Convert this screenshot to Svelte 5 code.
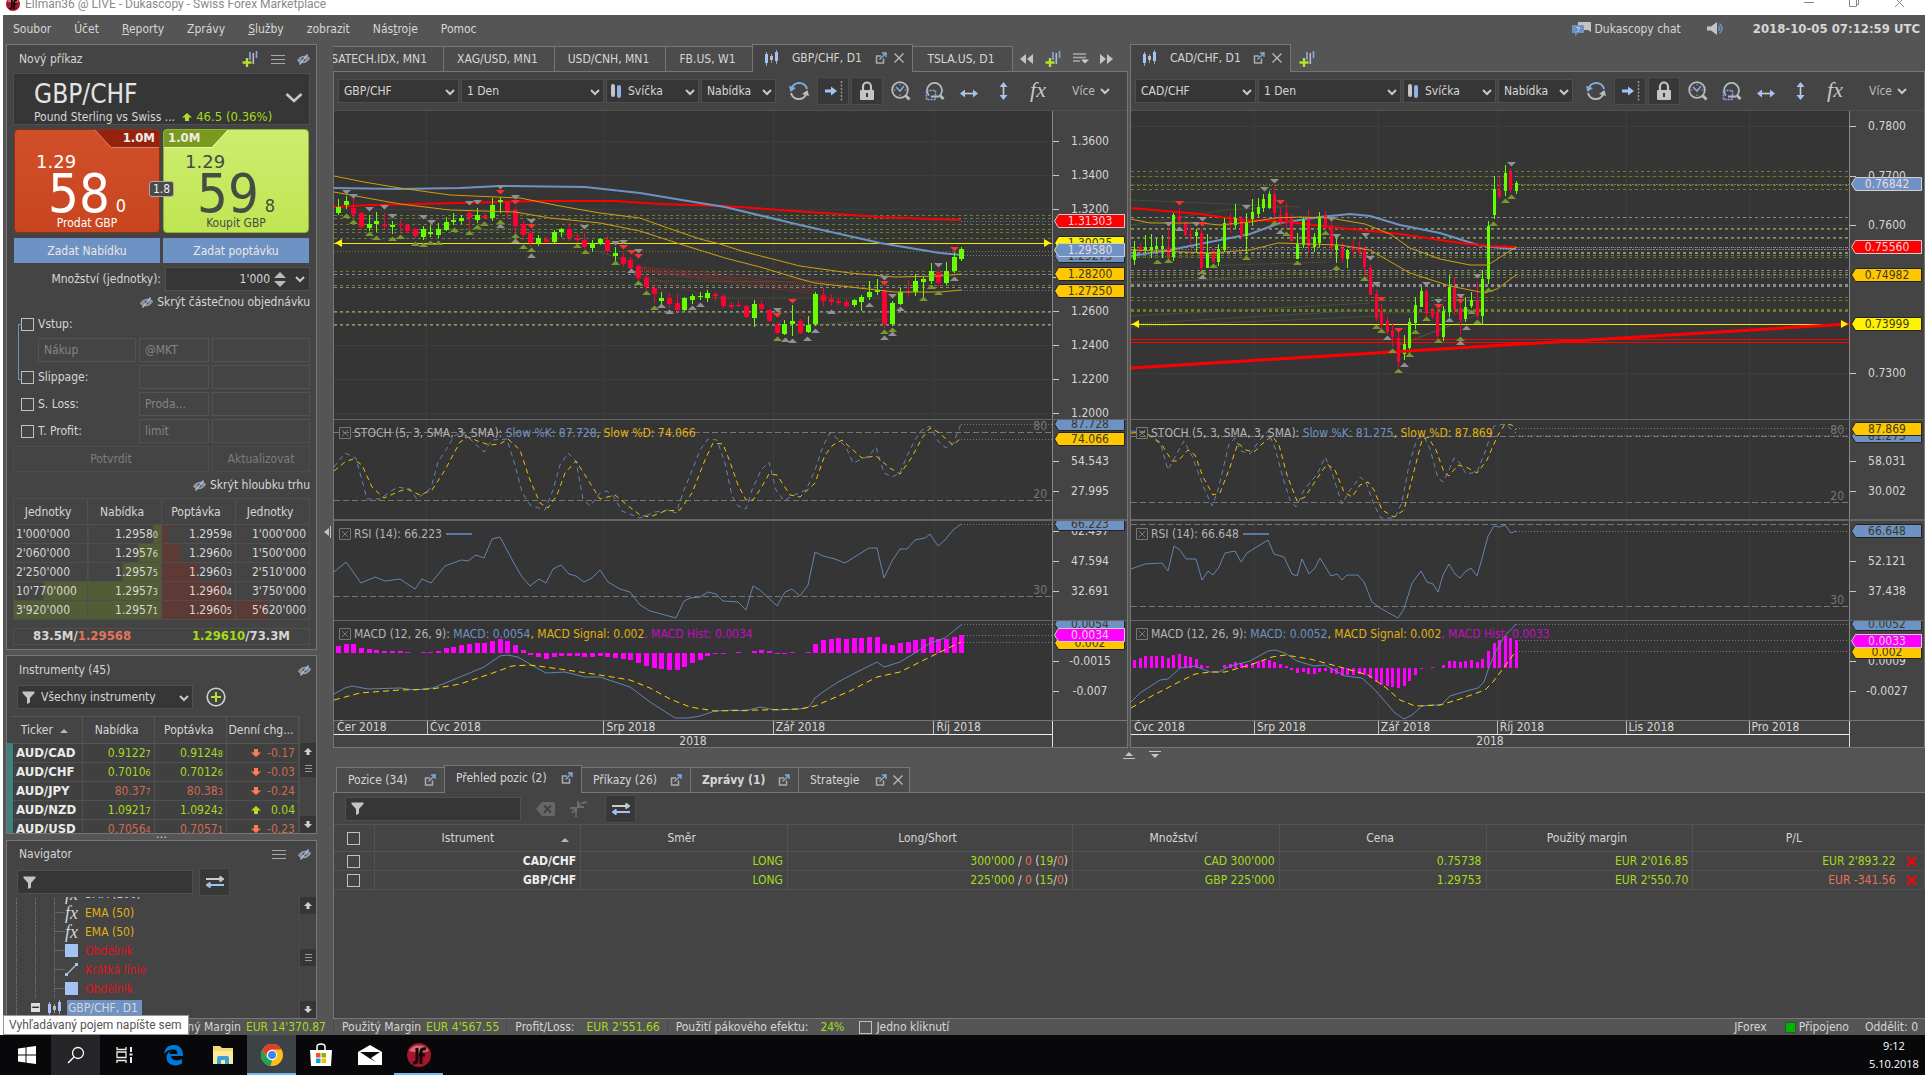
<script>
  const menu = [
    ["", "Soubor", ""],
    ["", "Účet", ""],
    ["", "R", "eporty"],
    ["", "Zprávy", ""],
    ["", "S", "lužby"],
    ["", "zobrazit", ""],
    ["Nás", "t", "roje"],
    ["", "Pomoc", ""],
  ];

  // bq, b, a, aq = share of the cell covered by the cumulative volume bar
  const depth = [
    { bidQty: "1'000'000", bq: 0, bid: "1.2958", bs: "0", b: 11, ask: "1.2959", as: "8", a: 8, askQty: "1'000'000", aq: 0 },
    { bidQty: "2'060'000", bq: 0, bid: "1.2957", bs: "6", b: 31, ask: "1.2960", as: "0", a: 24, askQty: "1'500'000", aq: 0 },
    { bidQty: "2'250'000", bq: 0, bid: "1.2957", bs: "5", b: 54, ask: "1.2960", as: "3", a: 49, askQty: "2'510'000", aq: 0 },
    { bidQty: "10'770'000", bq: 60, bid: "1.2957", bs: "3", b: 100, ask: "1.2960", as: "4", a: 87, askQty: "3'750'000", aq: 0 },
    { bidQty: "3'920'000", bq: 100, bid: "1.2957", bs: "1", b: 100, ask: "1.2960", as: "5", a: 100, askQty: "5'620'000", aq: 42 },
  ];

  const instruments = [
    { name: "AUD/CAD", bid: "0.9122", bs: "7", ask: "0.9124", as: "8", chg: "-0.17", quote: "up" },
    { name: "AUD/CHF", bid: "0.7010", bs: "6", ask: "0.7012", as: "6", chg: "-0.03", quote: "up" },
    { name: "AUD/JPY", bid: "80.37", bs: "7", ask: "80.38", as: "3", chg: "-0.24", quote: "down" },
    { name: "AUD/NZD", bid: "1.0921", bs: "7", ask: "1.0924", as: "2", chg: "0.04", quote: "up" },
    { name: "AUD/USD", bid: "0.7056", bs: "4", ask: "0.7057", as: "1", chg: "-0.23", quote: "down" },
  ];

  const tree = [
    { icon: "fxs", label: "SMA (100)", color: "plain" },
    { icon: "fxs", label: "EMA (50)", color: "gold" },
    { icon: "fxs", label: "EMA (50)", color: "gold" },
    { icon: "rect", label: "Obdélník", color: "red" },
    { icon: "line", label: "Krátká línie", color: "red" },
    { icon: "rect", label: "Obdélník", color: "red" },
  ];

  const positions = [
    { pair: "CAD/CHF", side: "LONG", long: "300'000", short: "0", nl: "19", ns: "0", qty: "CAD 300'000", price: "0.75738", margin: "EUR 2'016.85", pl: "EUR 2'893.22", loss: false },
    { pair: "GBP/CHF", side: "LONG", long: "225'000", short: "0", nl: "15", ns: "0", qty: "GBP 225'000", price: "1.29753", margin: "EUR 2'550.70", pl: "EUR -341.56", loss: true },
  ];

  const BLUE = "#6e92c3";
  const GOLD = "#ffc700";
  const PINK = "#ff00ff";

  const gbp = {
    pair: "GBP/CHF",
    x: 334,
    first: 338,
    step: 7.697,
    body: 5,
    end: 961,
    vgrid: [426, 603, 773, 934],
    hgrid: [141, 175, 209, 277, 312, 345, 379, 413],
    // direction, high, body top, body bottom, low
    candles: "g199,207,213,215 g196,201,205,209 r197,208,214,219 r211,213,227,230 g215,224,228,231 g212,221,224,232 r213,224,226,229 g221,225,227,234 r220,224,225,232 r224,225,231,233 r228,229,236,238 g226,229,237,240 g225,232,234,237 g223,229,235,238 g217,222,230,231 g213,220,222,225 g215,218,221,224 r210,213,218,230 g208,215,220,223 r213,216,218,219 g198,205,218,221 g197,200,202,213 r201,202,211,218 r207,210,226,236 r220,224,235,240 r230,233,243,247 g235,238,243,246 r237,239,242,242 g230,232,242,243 g228,229,232,237 r223,229,238,241 r233,238,240,243 r233,240,247,249 g240,243,248,252 g238,239,244,245 r236,240,251,254 g247,253,256,261 r252,257,264,267 r257,260,268,270 r264,266,278,282 r275,278,287,290 r286,288,294,303 g292,298,301,305 r293,298,304,308 r294,303,310,312 g297,298,310,311 g294,296,300,304 g292,296,297,300 g290,293,298,302 r292,294,296,301 r294,296,306,308 r302,305,307,309 r301,305,306,307 r305,306,317,318 g300,304,318,327 r300,304,309,311 r309,310,321,322 r322,325,333,334 g320,324,334,335 g305,321,324,336 r319,321,333,334 g316,325,332,333 g292,294,324,326 r288,295,301,306 r294,299,302,306 r298,301,303,305 r299,302,306,308 g299,300,305,307 g295,297,302,311 g281,292,297,300 g279,290,292,295 r289,291,324,328 g301,303,324,326 g288,292,304,305 r280,291,292,297 g274,281,292,296 g277,279,282,297 g263,271,281,284 r269,272,283,287 g262,271,283,285 g252,257,271,273 g247,249,259,261",
    levels: [
      [215, "o"], [218, "o"], [224, "o"], [229, "o"], [232, "o"], [238, "o"], [251, "od"], [271, "o"], [274, "g"],
      [285, "o"], [287, "g"], [311, "g"], [312, "o"], [324, "g"], [325, "o"],
    ],
    yellow: 243,
    reds: [],
    trend: "",
    rays: ["638,267 820,281", "638,268 815,285", "638,269 815,288", "638,270 815,291", "638,271 815,294", "646,276 700,294", "640,272 670,296", "815,281 875,289", "777,326 792,308", "792,308 810,320"],
    orays: ["423,229 500,230", "500,228 580,236", "646,281 875,282", "680,298 880,298", "815,325 890,319", "600,252 630,262"],
    dotted: [221, 255, 274, 290],
    lines: [
      ["ma red", "334,207 370,205 460,203 540,201 615,201 660,204 725,206 780,210 880,217 930,219 961,220"],
      ["ma blue", "334,188 400,189 460,188 500,186 585,187 640,193 700,203 725,207 800,225 880,243 940,253 962,255"],
      ["ma gold", "334,176 364,182 400,188 450,195 520,198 560,206 600,213 640,218 665,227 700,239 720,244 745,252 800,266 850,273 895,277 940,276 962,274"],
      ["ma gold", "334,192 400,204 450,210 515,212 550,218 600,223 640,231 680,244 725,258 760,267 800,279 815,283 850,287 895,292 940,292 962,290"],
    ],
    marks: {
      gd: "346,192 353,196 369,209 384,207 392,216 423,217 431,222 469,203 477,202 500,187 515,197 531,221 584,227 615,243 623,242 638,251 777,310 884,278 892,296 938,265",
      rd: "500,192 515,202 531,226 623,247 631,252 638,256 777,315 792,301 884,283 954,249",
      gu: "500,226 515,241 531,256 631,271 661,306 669,312 692,308 700,305 785,340 792,341 807,339 815,331 831,312 869,305 884,338 892,334 900,309 954,279",
      ou: "346,216 353,222 369,234 376,238 392,239 400,237 415,244 423,245 430,243 438,243 454,230 469,233 477,227 484,224 500,222 515,236 523,247 531,250 577,246 585,252 615,263 638,283 646,293 654,308 777,339 884,332 892,330 923,299 931,287 938,293",
    },
    axis: [
      ["1.3600", 141], ["1.3400", 175], ["1.3200", 209], ["1.2800", 277], ["1.2600", 311], ["1.2400", 345], ["1.2200", 379], ["1.2000", 413],
    ],
    tags: [
      ["1.31303", 221, "#ff0000", true], ["1.30025", 243, "#fff200", false], ["1.29275", 256, BLUE, false],
      ["1.29580", 250, BLUE, true], ["1.28200", 274, GOLD, false], ["1.27250", 291, GOLD, false],
    ],
    stoch: {
      k: "334,467 345,453 356,458 367,499 380,499 397,487 410,489 417,499 431,488 438,462 446,450 454,436 462,432 470,439 484,452 492,440 507,439 515,465 522,492 530,505 545,510 553,490 560,465 568,453 576,461 583,499 590,506 600,493 607,491 614,497 622,511 640,518 655,512 668,510 676,513 684,490 693,468 700,450 708,439 717,440 725,463 732,496 738,506 746,509 752,490 761,470 769,462 776,490 784,501 792,496 806,490 815,470 823,446 830,433 838,439 846,447 853,463 862,459 869,456 876,447 884,473 892,477 900,473 907,456 915,440 922,430 930,426 938,441 946,448 953,444 961,424",
      d: "334,471 345,462 353,459 362,465 372,487 384,498 400,491 407,489 420,495 432,490 445,470 460,442 468,437 480,442 490,445 500,444 508,439 520,450 530,480 540,503 548,508 557,495 565,473 576,461 585,475 600,499 615,495 627,505 640,515 650,517 665,511 680,510 692,493 705,460 713,443 723,444 730,462 738,485 746,500 753,500 761,488 769,474 777,475 790,495 800,497 815,483 825,455 833,445 842,440 853,450 862,458 876,456 890,468 900,474 912,457 922,438 930,428 938,432 953,445 961,438",
      kv: "87.728",
      dv: "74.066",
      levels: [["80", 432], ["20", 500]],
      dotted: [424, 439],
      axis: [["54.543", 461], ["27.995", 491]],
      tags: [["87.728", 424, BLUE, false], ["74.066", 439, GOLD, false]],
    },
    rsi: {
      line: "334,572 346,562 361,583 375,577 385,581 400,579 415,589 422,579 431,583 445,566 461,560 468,561 476,555 484,558 492,539 500,537 515,565 522,577 530,586 539,579 546,583 553,569 561,565 569,574 576,576 584,582 592,578 600,570 608,582 620,589 630,592 640,605 650,611 665,615 676,618 684,601 690,598 700,597 708,592 716,594 723,601 738,602 746,610 753,586 760,590 777,606 785,592 792,589 800,596 808,585 815,552 823,556 835,559 845,563 853,558 869,548 877,548 884,578 892,561 900,549 907,549 915,540 925,538 930,534 938,546 945,540 953,530 961,524",
      v: "66.223",
      levels: [["30", 596]],
      dotted: [524],
      axis: [["62.497", 531], ["47.594", 561], ["32.691", 591]],
      tags: [["66.223", 524, BLUE, false]],
    },
    macd: {
      zero: 653,
      bars: [7,9,9,5,4,3,2,2,2,1,0,1,1,2,5,6,8,9,10,10,12,14,12,8,3,-2,-4,-6,-4,-3,-3,-3,-4,-4,-3,-4,-5,-6,-7,-10,-13,-15,-16,-17,-17,-14,-10,-7,-3,-1,-1,0,1,0,2,3,2,-1,-1,1,0,1,9,13,14,15,14,15,15,16,16,9,8,10,11,13,14,16,14,14,16,18],
      m: "334,694 345,688 352,686 368,689 400,688 415,690 433,688 460,677 484,667 500,656 507,655 518,657 535,667 546,673 565,672 585,677 600,677 630,687 650,702 675,718 688,718 700,716 715,711 735,710 745,711 760,707 775,710 800,709 809,707 815,698 823,692 838,682 855,673 877,662 884,667 900,662 915,653 930,643 945,638 961,625",
      s: "334,700 360,693 400,690 432,689 460,684 490,674 512,666 530,665 560,669 600,675 630,680 650,688 670,699 690,707 715,711 760,710 800,709 815,706 850,691 877,677 900,672 930,657 961,642",
      v: ["0.0054", "0.002", "0.0034"],
      dotted: [624, 635, 642],
      axis: [["-0.0015", 661], ["-0.007", 691]],
      tags: [["0.0054", 624, BLUE, false], ["0.002", 643, GOLD, false], ["0.0034", 635, PINK, true]],
    },
    months: [["Čer 2018", 92], ["Čvc 2018", 177], ["Srp 2018", 170], ["Zář 2018", 161], ["Říj 2018", 118]],
  };

  const cad = {
    pair: "CAD/CHF",
    x: 1131,
    first: 1134,
    step: 5.618,
    body: 3,
    end: 1516,
    vgrid: [1254, 1378, 1497, 1626, 1749],
    hgrid: [126, 176, 225, 324, 373],
    candles: "g241,249,260,265 r243,247,251,253 g235,247,250,253 g234,247,250,258 g238,246,249,253 g235,246,249,258 r228,247,255,259 g213,215,257,261 r208,216,221,225 r221,223,235,236 r227,234,236,245 g229,232,236,253 r229,233,268,271 g234,253,268,268 r249,251,262,262 g244,249,262,266 g218,223,250,252 r213,221,224,233 g204,218,225,229 r216,218,236,239 g213,222,236,254 g199,212,219,226 g198,207,214,217 g194,199,208,212 g191,194,208,209 r186,194,213,225 r207,215,221,226 r203,213,220,229 r214,218,241,242 g233,244,259,259 g217,220,245,248 r210,219,246,253 g233,237,247,252 g212,217,243,247 r211,216,227,231 r221,228,248,250 g235,245,250,263 r242,248,258,263 g249,250,259,268 r239,247,250,258 r241,247,253,254 r246,250,267,278 r264,268,295,295 r290,294,318,321 r304,311,325,329 r317,321,332,334 r323,330,337,347 r333,338,362,367 g335,344,354,360 g318,322,348,353 g297,305,323,329 g287,291,307,307 r289,291,313,317 r308,311,317,319 r304,312,336,340 g306,311,337,341 g275,287,312,317 r277,288,309,315 r302,308,320,334 g297,307,319,322 g292,300,306,308 r282,300,316,318 g270,279,316,325 g221,226,279,284 g176,189,215,219 r177,190,197,198 g165,173,191,196 r168,172,190,193 g181,183,191,194",
    levels: [
      [171, "o"], [176, "o"], [184, "od"], [185, "o"], [189, "o"], [217, "g"], [228, "g"], [229, "o"], [237, "g"], [238, "o"], [247, "g"], [249, "gd"],
      [252, "g"], [253, "g"], [255, "o"], [257, "o"], [270, "g"], [272, "o"], [274, "g"], [277, "o"], [285, "gt"],
      [297, "o"], [300, "o"], [310, "ot"],
    ],
    yellow: 324,
    reds: [339, 342],
    trend: "1131,368 1849,324",
    rays: ["1398,333 1412,320", "1440,312 1450,282", "1170,222 1180,216"],
    orays: ["1131,200 1230,204 1300,207", "1131,225 1225,210 1280,207", "1131,257 1200,256", "1131,282 1350,276", "1200,266 1330,262", "1131,284 1325,272", "1131,316 1370,303", "1131,324 1370,310", "1131,327 1380,316", "1400,345 1480,314", "1380,313 1460,312", "1400,344 1450,326"],
    dotted: [184, 247, 249, 275],
    lines: [
      ["ma blue", "1131,256 1170,250 1210,242 1250,234 1280,223 1320,217 1350,214 1370,216 1400,225 1440,233 1478,245 1500,248 1516,249"],
      ["ma red", "1131,208 1200,214 1240,220 1280,221 1340,228 1400,234 1460,243 1490,246 1516,247"],
      ["ma gold", "1131,219 1150,223 1200,223 1220,225 1250,222 1275,218 1300,217 1330,218 1365,224 1390,234 1410,248 1440,259 1470,265 1488,265 1516,247"],
      ["ma gold", "1131,250 1210,253 1250,250 1278,243 1340,245 1370,250 1410,273 1450,286 1485,293 1497,289 1516,275"],
    ],
    marks: {
      gd: "1168,224 1196,224 1202,219 1246,207 1264,189 1274,181 1331,219 1336,236 1365,235 1370,258 1376,284 1426,284 1438,301 1460,296 1477,276 1511,164",
      rd: "1179,203 1202,224 1280,202 1381,299 1398,330 1438,306 1460,301",
      gu: "1179,229 1202,277 1280,232 1387,338 1404,365 1449,320 1466,328 1460,343",
      ou: "1157,262 1168,261 1202,272 1213,266 1246,258 1274,223 1286,234 1297,263 1325,233 1336,268 1364,279 1376,327 1381,331 1392,351 1398,371 1409,355 1415,332 1426,319 1438,341 1460,339 1471,312 1477,322 1488,290 1493,224 1505,201 1511,197",
    },
    axis: [["0.7800", 126], ["0.7700", 176], ["0.7600", 225], ["0.7300", 373]],
    tags: [
      ["0.76842", 184, BLUE, true], ["0.75560", 247, "#ff0000", true], ["0.74982", 275, GOLD, false], ["0.73999", 324, "#fff200", false],
    ],
    stoch: {
      k: "1131,431 1145,432 1160,442 1168,470 1176,455 1184,441 1192,456 1204,488 1212,506 1218,490 1229,444 1235,438 1241,451 1250,454 1259,441 1268,431 1275,448 1283,478 1290,500 1296,507 1304,490 1318,473 1325,457 1331,470 1342,504 1350,490 1360,477 1366,482 1374,505 1381,518 1395,518 1402,502 1409,465 1417,439 1424,436 1430,449 1438,478 1443,482 1449,470 1454,458 1460,463 1466,474 1477,472 1485,452 1494,426 1505,424 1516,433",
      d: "1131,433 1145,432 1162,445 1172,461 1178,461 1188,450 1195,455 1203,477 1213,495 1220,493 1230,467 1238,443 1246,450 1254,452 1262,444 1272,436 1279,445 1287,475 1297,501 1305,497 1316,480 1327,464 1335,470 1344,492 1352,497 1360,485 1368,482 1374,490 1382,510 1394,517 1404,510 1413,475 1422,440 1428,437 1436,450 1444,472 1449,476 1458,465 1468,468 1477,473 1487,460 1497,437 1505,424 1512,425 1516,430",
      kv: "81.275",
      dv: "87.869",
      levels: [["80", 436], ["20", 502]],
      dotted: [428, 435],
      axis: [["58.031", 461], ["30.002", 491]],
      tags: [["81.275", 436, BLUE, false], ["87.869", 429, GOLD, false]],
    },
    rsi: {
      line: "1131,569 1145,564 1162,563 1168,571 1174,546 1180,550 1186,559 1196,559 1202,580 1208,571 1213,575 1219,567 1225,553 1235,551 1241,562 1247,553 1268,540 1274,554 1284,557 1292,574 1297,576 1302,559 1309,574 1315,568 1320,558 1331,576 1337,574 1342,580 1347,575 1358,575 1364,582 1372,602 1380,608 1398,618 1404,609 1412,583 1421,571 1427,582 1433,584 1438,592 1443,575 1449,564 1455,574 1460,578 1466,571 1471,568 1477,576 1483,555 1488,536 1494,526 1500,527 1505,525 1511,533 1516,531",
      v: "66.648",
      levels: [["", 524], ["30", 606]],
      dotted: [531],
      axis: [["52.121", 561], ["37.438", 591]],
      tags: [["66.648", 531, BLUE, false]],
    },
    macd: {
      zero: 668,
      bars: [8,10,12,12,12,12,10,13,14,12,11,9,3,2,0,0,3,4,6,5,4,5,7,8,8,6,4,2,-2,-5,-4,-6,-6,-4,-3,-5,-6,-8,-7,-7,-6,-7,-10,-14,-17,-18,-19,-20,-18,-13,-7,-1,0,1,0,3,7,7,6,7,8,6,9,17,25,28,32,30,28],
      m: "1131,702 1140,693 1160,680 1168,679 1180,668 1195,666 1210,672 1219,672 1230,666 1250,661 1268,651 1275,650 1285,653 1297,661 1314,666 1325,665 1345,676 1362,678 1375,690 1395,713 1404,719 1412,715 1422,706 1432,705 1441,705 1450,696 1470,690 1478,688 1484,682 1489,667 1496,651 1504,637 1516,624",
      s: "1131,708 1150,697 1175,684 1195,674 1210,672 1225,672 1250,665 1272,657 1285,655 1310,659 1340,667 1368,675 1385,687 1400,700 1415,706 1440,705 1460,699 1485,690 1493,682 1505,666 1516,651",
      v: ["0.0052", "0.002", "0.0033"],
      dotted: [624, 640, 651],
      axis: [["0.0009", 661], ["-0.0027", 691]],
      tags: [["0.0052", 624, BLUE, false], ["0.002", 652, GOLD, false], ["0.0033", 641, PINK, true]],
    },
    months: [["Čvc 2018", 123], ["Srp 2018", 124], ["Zář 2018", 119], ["Říj 2018", 129], ["Lis 2018", 123], ["Pro 2018", 100]],
  };

  function parseCandles(c) {
    return c.candles.split(" ").map((s, i) => {
      const [high, top, bottom, low] = s.slice(1).split(",").map(Number);
      return { up: s[0] === "g", x: Math.round(c.first + i * c.step), high, top, bottom, low };
    });
  }

  function parseMarks(c) {
    return Object.entries(c.marks).flatMap(([kind, list]) =>
      list.split(" ").map((p) => {
        const [x, y] = p.split(",").map(Number);
        const dir = kind[1] === "u" ? -1 : 1;
        return { kind: kind[0], d: `M${x - 4} ${y - 2 * dir}h9l-4.5 ${4.5 * dir}z` };
      })
    );
  }

  let quantity = "1'000";
  let filter = "";
  let posFilter = "";
</script>

{#snippet icon(name)}
  {#if name === "chev"}
    <svg class="i-chev" width="12" height="8" viewBox="0 0 12 8"><path d="M2 2l4 4 4-4" fill="none" stroke="#c8c8c8" stroke-width="2" /></svg>
  {:else if name === "addchart"}
    <svg width="18" height="18" viewBox="0 0 18 18">
      <path d="M9 2v8M15.500 1v7" stroke="#86abe0" stroke-width="1.600" /><path d="M12.300 3v11" stroke="#bbb" stroke-width="1.600" />
      <path d="M6 8v9M1.500 12.500h9" stroke="#b5e02c" stroke-width="2.400" />
    </svg>
  {:else if name === "burger"}
    <svg width="14" height="10" viewBox="0 0 14 10"><path d="M0 1.500h14M0 5.500h14M0 9.500h14" stroke="#a8a8a8" /></svg>
  {:else if name === "eye"}
    <svg width="13" height="11" viewBox="0 0 13 11">
      <path d="M.5 6.500c1.500-4 8.500-6 12-2.500-1.500 5-9 6.500-12 2.500z" fill="#8b9096" stroke="#a5a5a5" />
      <circle cx="6.500" cy="5.400" r="1.800" fill="#3b3b3b" /><path d="M2.500 10.500l8-10" stroke="#9fc0ee" stroke-width="1.300" />
    </svg>
  {:else if name === "funnel"}
    <svg width="13" height="13" viewBox="0 0 13 13"><path d="M.5.500h12v1.500L8 7v4.500L5 13V7L.5 2z" fill="#c4c4c4" /></svg>
  {:else if name === "swap"}
    <svg width="18" height="12" viewBox="0 0 18 12">
      <path d="M0 3h15M13.500.500L17 3l-3.500 2.500" fill="none" stroke="#ccc" stroke-width="2" />
      <path d="M18 9H3M4.500 6.500L1 9l3.500 2.500" fill="none" stroke="#a3c4f3" stroke-width="2" />
    </svg>
  {:else if name === "candles"}
    <svg width="15" height="16" viewBox="0 0 15 16">
      <path d="M2.500 2v14M12.500 0v14" stroke="#86abe0" /><path d="M1 4h3v9H1zM11 2h3v9h-3z" fill="#a3c4f3" />
      <path d="M7.500 4v9" stroke="#999" /><path d="M6 6h3v4H6z" fill="#bbb" />
    </svg>
  {:else if name === "bars"}
    <svg width="11" height="14" viewBox="0 0 11 14">
      <rect width="4" height="13" rx="2" fill="#c4c4c4" /><rect x="6" y="1" width="4" height="13" rx="2" fill="#8fb2e6" />
    </svg>
  {:else if name === "popout"}
    <svg width="12" height="12" viewBox="0 0 12 12">
      <path d="M6 4H1.500v7h7V6.500" fill="none" stroke="#aaa" stroke-width="1.500" />
      <path d="M4.500 7.500L11 1M7 1h4v4" fill="none" stroke="#86abe0" stroke-width="1.400" />
    </svg>
  {:else if name === "close"}
    <svg width="10" height="10" viewBox="0 0 10 10"><path d="M.5.500l9 9M9.500.500l-9 9" stroke="#bbb" stroke-width="1.300" /></svg>
  {:else if name === "rewind"}
    <svg width="13" height="10" viewBox="0 0 13 10"><path d="M6 0v10L0 5zM13 0v10L7 5z" fill="#c4c4c4" /></svg>
  {:else if name === "forward"}
    <svg width="13" height="10" viewBox="0 0 13 10"><path d="M0 0v10l6-5zM7 0v10l6-5z" fill="#c4c4c4" /></svg>
  {:else if name === "listdown"}
    <svg width="16" height="11" viewBox="0 0 16 11"><path d="M0 1h13M0 4.500h13M0 8h7" stroke="#aaa" stroke-width="1.500" /><path d="M8 6.500h8l-4 4z" fill="#ccc" /></svg>
  {:else if name === "refresh"}
    <svg width="20" height="20" viewBox="0 0 20 20" fill="none" stroke-width="2">
      <path d="M2.500 8A8 8 0 0 1 18 8" stroke="#86abe0" /><path d="M0 5l1.500 6L7 7z" fill="#86abe0" />
      <path d="M17.500 12A8 8 0 0 1 2 12" stroke="#bbb" /><path d="M20 15l-1.500-6L13 13z" fill="#bbb" />
    </svg>
  {:else if name === "shift"}
    <svg width="20" height="20" viewBox="0 0 20 20">
      <path d="M2 8.500h6v-3l6 4.500-6 4.500v-3H2z" fill="#a3c4f3" /><path d="M18.500 0v20" stroke="#999" stroke-width="1.500" stroke-dasharray="2 1.500" />
    </svg>
  {:else if name === "lock"}
    <svg width="16" height="20" viewBox="0 0 16 20">
      <path d="M4 9V5.500a4 4 0 0 1 8 0V9" fill="none" stroke="#c4c4c4" stroke-width="2.200" />
      <rect x="1" y="9" width="14" height="10" rx="1" fill="#c4c4c4" /><path d="M8 12v4" stroke="#363636" stroke-width="2" />
    </svg>
  {:else if name === "clockzoom"}
    <svg width="20" height="20" viewBox="0 0 20 20" fill="none">
      <circle cx="9" cy="9" r="7.800" stroke="#bbb" stroke-width="1.800" /><path d="M14.500 14.500l4 4" stroke="#bbb" stroke-width="3" />
      <path d="M5 6l4 4 4-5" stroke="#86abe0" stroke-width="1.600" /><path d="M3 9h1.500M13.500 9H15M9 3v1.500M9 13.500V15" stroke="#86abe0" />
    </svg>
  {:else if name === "areazoom"}
    <svg width="20" height="20" viewBox="0 0 20 20" fill="none">
      <path d="M4 14.500A7.500 7.500 0 1 1 15 14.500M6 15.500h8" stroke="#bbb" stroke-width="1.800" /><path d="M14.500 14l4 4" stroke="#bbb" stroke-width="3" />
      <path d="M1.500 9.500h9v9h-9z" stroke="#86abe0" stroke-width="1.600" stroke-dasharray="2 1" />
    </svg>
  {:else if name === "harrow"}
    <svg width="18" height="9" viewBox="0 0 18 9"><path d="M4 4.500h10" stroke="#ccc" stroke-width="1.600" /><path d="M5 .5v8l-5-4zM13 .5v8l5-4z" fill="#a3c4f3" /></svg>
  {:else if name === "varrow"}
    <svg width="9" height="18" viewBox="0 0 9 18"><path d="M4.500 4v10" stroke="#ccc" stroke-width="1.600" /><path d="M.5 5h8l-4-5zM.5 13h8l-4 5z" fill="#a3c4f3" /></svg>
  {:else if name === "chat"}
    <svg width="19" height="14" viewBox="0 0 19 14">
      <path d="M6 0h12q1 0 1 1v9l-3-2h-4V4H6z" fill="#c4c4c4" /><path d="M1 3h10q1 0 1 1v7H6l-3 3v-3H0V4q0-1 1-1z" fill="#6e92c3" />
      <path d="M4.500 5.500q3-1 3 .5T6 8M6 9v1" stroke="#d5e4fa" fill="none" />
    </svg>
  {:else if name === "speaker"}
    <svg width="18" height="13" viewBox="0 0 18 13">
      <path d="M0 4.500h4L10 0v13L4 8.500H0z" fill="#c4c4c4" /><path d="M11.500 4q2 2.500 0 5M12.500 1.500q5 5 0 10" fill="none" stroke="#6e92c3" stroke-width="1.600" />
    </svg>
  {:else if name === "plus"}
    <svg width="20" height="20" viewBox="0 0 20 20"><circle cx="10" cy="10" r="8.800" fill="none" stroke="#d0d0d0" stroke-width="1.600" /><path d="M10 5v10M5 10h10" stroke="#b5e02c" stroke-width="2" /></svg>
  {:else if name === "rect"}
    <svg width="13" height="13" viewBox="0 0 13 13"><rect width="13" height="13" fill="#a3c4f3" /></svg>
  {:else if name === "line"}
    <svg width="13" height="13" viewBox="0 0 13 13"><path d="M2 11l9-9" stroke="#bbb" stroke-width="1.300" /><path d="M0 10h3v3H0zM10 0h3v3h-3z" fill="#a3c4f3" /></svg>
  {:else if name === "erase"}
    <svg width="19" height="14" viewBox="0 0 19 14"><path d="M6 0h11q2 0 2 2v10q0 2-2 2H6L0 7z" fill="#666" /><path d="M8 3.500l7 7M15 3.500l-7 7" stroke="#404040" stroke-width="2" /></svg>
  {:else if name === "wand"}
    <svg width="18" height="17" viewBox="0 0 18 17" fill="none" stroke="#6c6c6c" stroke-width="2"><path d="M0 8h6v6M2 13l4-5" /><path d="M8 1v6h6M8 7l3-4M12 3l5-1" /><path d="M5 16h2" /></svg>
  {:else if name === "up"}
    <svg width="10" height="8" viewBox="0 0 10 8"><path d="M5 0l5 4.500H7V8H3V4.500H0z" fill="#b0dd25" /></svg>
  {:else if name === "down"}
    <svg width="10" height="8" viewBox="0 0 10 8"><path d="M5 8l5-4.500H7V0H3v3.500H0z" fill="#ff7b54" /></svg>
  {:else if name === "sup"}
    <svg width="8" height="7" viewBox="0 0 8 7"><path d="M4 0l4 4H5.500v3h-3V4H0z" fill="#d0d0d0" /></svg>
  {:else if name === "sdown"}
    <svg width="8" height="7" viewBox="0 0 8 7"><path d="M4 7l4-4H5.500V0h-3v3H0z" fill="#d0d0d0" /></svg>
  {:else if name === "sort"}
    <svg width="8" height="4" viewBox="0 0 8 4"><path d="M4 0l4 4H0z" fill="#b8b8b8" /></svg>
  {:else if name === "boxx"}
    <svg width="12" height="12" viewBox="0 0 12 12"><path d="M.5.500h11v11H.5zM3 3l6 6M9 3l-6 6" fill="none" stroke="#777" /></svg>
  {:else if name === "jf"}
    <svg width="24" height="24" viewBox="0 0 24 24">
      <circle cx="12" cy="12" r="12" fill="#a3162c" /><path d="M2 8a11 10 0 0 1 20 0q-8 3-20 0z" fill="#cf6a78" />
      <path d="M10 5v12q0 3-4 3M14 21V9q0-4 5-3M12 12h6" stroke="#160406" stroke-width="3" fill="none" />
    </svg>
  {/if}
{/snippet}

{#snippet combo(label, options, cls, glyph)}
  <span class="combo {cls}">
    {#if glyph}<span class="lead">{@render icon(glyph)}</span>{/if}
    <select aria-label={label}>
      {#each options as option}<option>{option}</option>{/each}
    </select>
    {@render icon("chev")}
  </span>
{/snippet}

{#snippet axisLabels(axis, tags, y, h, levels)}
  <svg class="axis" width="75" height={h} viewBox="0 {y} 74 {h}">
    {#each levels as [text, ly]}
      {#if text}<text class="level" x="-6" y={ly - 2} text-anchor="end">{text}</text>{/if}
    {/each}
    {#each axis as [text, ly]}
      <path d="M0 {ly}h6" stroke="#c8c8c8" shape-rendering="crispEdges" />
      <text x="37" y={ly + 4} text-anchor="middle">{text}</text>
    {/each}
    {#each tags as [text, ly, color, light]}
      <path class="tag" class:light d="M1.500 {ly}l4-6.500h66v13h-66z" fill={color} />
      <text class="tagtext" class:light x="37" y={ly + 4} text-anchor="middle">{text}</text>
    {/each}
  </svg>
{/snippet}

{#snippet grid(c, y, h)}
  {#each c.vgrid as x}<path class="gridline" d="M{x} {y}v{h}" />{/each}
{/snippet}

{#snippet rests(c, list)}
  {#each list as y}<path class="dotted" d="M{c.end} {y}H{c.x + 718}" />{/each}
{/snippet}

{#snippet chart(c)}
  <div class="toolbar">
    {@render combo("Instrument", [c.pair], "w-pair")}
    {@render combo("Perioda", ["1 Den"], "w-period")}
    {@render combo("Typ grafu", ["Svíčka"], "w-type", "bars")}
    {@render combo("Strana", ["Nabídka"], "w-side")}
    <button class="tool" aria-label="Obnovit">{@render icon("refresh")}</button>
    <button class="tool on" aria-label="Posun grafu">{@render icon("shift")}</button>
    <button class="tool on" aria-label="Zamknout">{@render icon("lock")}</button>
    <button class="tool" aria-label="Časový zoom">{@render icon("clockzoom")}</button>
    <button class="tool" aria-label="Zoom oblasti">{@render icon("areazoom")}</button>
    <button class="tool low" aria-label="Roztáhnout vodorovně">{@render icon("harrow")}</button>
    <button class="tool" aria-label="Roztáhnout svisle">{@render icon("varrow")}</button>
    <button class="tool fx">fx</button>
    <button class="more">Více {@render icon("chev")}</button>
  </div>
  <div class="pane main">
    <svg class="plot" height="308" viewBox="{c.x} 111 718 308" preserveAspectRatio="none">
      {@render grid(c, 111, 308)}
      {#each c.hgrid as y}<path class="gridline" d="M{c.x} {y}h718" />{/each}
      {#each c.levels as [y, kind]}<path class="lvl {kind}" d="M{c.x} {y}h718" />{/each}
      {#each c.orays as points}<polyline class="ray olive" {points} />{/each}
      {#each c.rays as points}<polyline class="ray" {points} />{/each}
      {@render rests(c, c.dotted)}
      <path d="M{c.x} {c.yellow}h718" stroke="#f2e600" shape-rendering="crispEdges" />
      {#each c.reds as y}<path d="M{c.x} {y}h718" stroke="#ff0000" shape-rendering="crispEdges" />{/each}
      {#each c.lines.filter((l) => l[0] !== "ma gold") as [cls, points]}<polyline class={cls} {points} />{/each}
      {#each parseCandles(c) as k}
        <g fill={k.up ? "#66ff00" : "#ff0033"} shape-rendering="crispEdges">
          <rect x={k.x} y={k.high} width="1" height={k.low - k.high} />
          <rect x={k.x - (c.body - 1) / 2} y={k.top} width={c.body} height={Math.max(1, k.bottom - k.top)} />
        </g>
      {/each}
      {#each c.lines.filter((l) => l[0] === "ma gold") as [cls, points]}<polyline class={cls} {points} />{/each}
      {#if c.trend}<polyline points={c.trend} fill="none" stroke="#ff0000" stroke-width="3" />{/if}
      {#each parseMarks(c) as m}<path class="mark {m.kind}" d={m.d} />{/each}
      <path d="M{c.x + 1} {c.yellow}l7-4v8zM{c.x + 717} {c.yellow}l-7-4v8z" fill="#fff200" />
    </svg>
    {@render axisLabels(c.axis, c.tags, 111, 308, [])}
  </div>
  <div class="pane">
    <svg class="plot" height="99" viewBox="{c.x} 420 718 99" preserveAspectRatio="none">
      {@render grid(c, 420, 99)}
      {#each c.stoch.levels as l}<path class="limit" d="M{c.x} {l[1]}h718" />{/each}
      {@render rests(c, c.stoch.dotted)}
      <polyline class="ind k" points={c.stoch.k} />
      <polyline class="ind d" points={c.stoch.d} />
    </svg>
    {@render axisLabels(c.stoch.axis, c.stoch.tags, 420, 99, c.stoch.levels)}
    <p class="legend">{@render icon("boxx")}STOCH (5, 3, SMA, 3, SMA): <span class="c-blue">Slow %K: {c.stoch.kv}</span><span class="c-gold">, Slow %D: {c.stoch.dv}</span></p>
  </div>
  <div class="pane thick">
    <svg class="plot" height="99" viewBox="{c.x} 521 718 99" preserveAspectRatio="none">
      {@render grid(c, 521, 99)}
      {#each c.rsi.levels as l}<path class="limit" d="M{c.x} {l[1]}h718" />{/each}
      {@render rests(c, c.rsi.dotted)}
      <polyline class="ind" points={c.rsi.line} />
    </svg>
    {@render axisLabels(c.rsi.axis, c.rsi.tags, 521, 99, c.rsi.levels)}
    <p class="legend">{@render icon("boxx")}RSI (14): {c.rsi.v}<span class="swatch"></span></p>
  </div>
  <div class="pane">
    <svg class="plot" height="99" viewBox="{c.x} 621 718 99" preserveAspectRatio="none">
      {@render grid(c, 621, 99)}
      {@render rests(c, c.macd.dotted)}
      {#each c.macd.bars as b, i}
        {#if b}<rect x={Math.round(c.first + i * c.step) - (c.body - 1) / 2} y={b > 0 ? c.macd.zero - b : c.macd.zero} width={c.body} height={Math.abs(b)} fill="#ff00ff" shape-rendering="crispEdges" />{/if}
      {/each}
      <polyline class="ind" points={c.macd.m} />
      <polyline class="ind s" points={c.macd.s} />
    </svg>
    {@render axisLabels(c.macd.axis, c.macd.tags, 621, 99, [])}
    <p class="legend">{@render icon("boxx")}MACD (12, 26, 9): <span class="c-blue">MACD: {c.macd.v[0]}</span><span class="c-gold">, MACD Signal: {c.macd.v[1]}</span><span class="c-pink">, MACD Hist: {c.macd.v[2]}</span></p>
  </div>
  <div class="time">
    <div class="scale">
      <div class="months">
        {#each c.months as [name, span]}<span style="flex-grow: {span}">{name}</span>{/each}
      </div>
      <div class="year">2018</div>
    </div>
  </div>
{/snippet}

<div class="desktop">
  <div class="titlebar">
    <span class="applogo">{@render icon("jf")}</span>
    <span class="apptitle">Ellman36 @ LIVE - Dukascopy - Swiss Forex Marketplace</span>
    <svg width="102" height="10" viewBox="0 0 102 10" fill="none" stroke="#888">
      <path d="M0 2.500h10M45.500 0v6.500h7V0M52 4.500h2.500V0M91 7l9-9M91-2l9 9" />
    </svg>
  </div>

  <div class="window">
    <header class="menubar">
      <nav>
        {#each menu as [a, u, b]}
          <button>{a}{#if a || b}<u>{u}</u>{:else}{u}{/if}{b}</button>
        {/each}
      </nav>
      <button class="chat">{@render icon("chat")}Dukascopy chat</button>
      <button class="sound" aria-label="Zvuk">{@render icon("speaker")}</button>
      <time>2018-10-05 07:12:59 UTC</time>
    </header>

    <div class="body">
      <aside class="dock">
        <section class="panel order">
          <div class="head">
            <h2>Nový příkaz</h2>
            {@render icon("addchart")}{@render icon("burger")}{@render icon("eye")}
          </div>
          <div class="symbol">
            <div class="pair">GBP/CHF</div>
            <div class="desc">Pound Sterling vs Swiss ... <span class="c-up">{@render icon("up")} 46.5 (0.36%)</span></div>
            <svg class="bigchev" width="18" height="12" viewBox="0 0 18 12"><path d="M1.500 2L9 9 16.500 2" fill="none" stroke="#c8c8c8" stroke-width="2.600" /></svg>
          </div>
          <div class="tiles">
            <button class="tile sell">
              <svg class="corner" width="64" height="18" viewBox="0 0 64 18"><path d="M0 0h64v17H16z" fill="#93230c" /><path d="M0 0l16 17.500h48" fill="none" stroke="#d9826c" /></svg>
              <b>1.0M</b>
              <span class="fig">1.29</span>
              <span class="big">58<small>0</small></span>
              <span class="what">Prodat GBP</span>
            </button>
            <button class="tile buy">
              <svg class="corner" width="64" height="18" viewBox="0 0 64 18"><path d="M0 0h64L48 17H0z" fill="#7b9a1c" /><path d="M64 0L48 17.500H0" fill="none" stroke="#e6f7b0" /></svg>
              <b>1.0M</b>
              <span class="fig">1.29</span>
              <span class="big">59<small>8</small></span>
              <span class="what">Koupit GBP</span>
            </button>
            <span class="spread">1.8</span>
          </div>
          <div class="pairbtns">
            <button>Zadat Nabídku</button>
            <button>Zadat poptávku</button>
          </div>
          <div class="qty">
            <label for="qty">Množství (jednotky):</label>
            <span class="qtybox">
              <input id="qty" type="text" bind:value={quantity} />
              <svg width="12" height="15" viewBox="0 0 12 15"><path d="M6 0l6 6H0zM6 15l6-6H0z" fill="#bbb" /></svg>
              {@render icon("chev")}
            </span>
          </div>
          <button class="hide">{@render icon("eye")} Skrýt částečnou objednávku</button>
          <div class="fields">
            <label class="check first"><input type="checkbox" />Vstup:</label>
            <input class="indent" type="text" value="Nákup" disabled aria-label="Typ vstupu" />
            <input type="text" value="@MKT" disabled aria-label="Podmínka vstupu" />
            <input type="text" disabled aria-label="Cena vstupu" />
            <label class="check"><input type="checkbox" />Slippage:</label>
            <input type="text" disabled aria-label="Slippage" />
            <input type="text" disabled aria-label="Slippage body" />
            <label class="check"><input type="checkbox" />S. Loss:</label>
            <input type="text" value="Proda..." disabled aria-label="Stop loss" />
            <input type="text" disabled aria-label="Stop loss cena" />
            <label class="check"><input type="checkbox" />T. Profit:</label>
            <input type="text" value="limit" disabled aria-label="Take profit" />
            <input type="text" disabled aria-label="Take profit cena" />
            <button class="confirm" disabled>Potvrdit</button>
            <button disabled>Aktualizovat</button>
          </div>
          <button class="hide deep">{@render icon("eye")} Skrýt hloubku trhu</button>
          <table class="depth">
            <thead><tr><th>Jednotky</th><th>Nabídka</th><th>Poptávka</th><th>Jednotky</th></tr></thead>
            <tbody>
              {#each depth as d}
                <tr>
                  <td class="l" style="background: linear-gradient(to left, #535d35 {d.bq}%, transparent {d.bq}%)">{d.bidQty}</td>
                  <td style="background: linear-gradient(to left, #535d35 {d.b}%, transparent {d.b}%)">{d.bid}<small>{d.bs}</small></td>
                  <td style="background: linear-gradient(to right, #5d3a33 {d.a}%, transparent {d.a}%)">{d.ask}<small>{d.as}</small></td>
                  <td style="background: linear-gradient(to right, #5d3a33 {d.aq}%, transparent {d.aq}%)">{d.askQty}</td>
                </tr>
              {/each}
            </tbody>
          </table>
          <div class="totals">
            <span>83.5M/<span class="c-down">1.29568</span></span>
            <span><span class="c-up">1.29610</span>/73.3M</span>
          </div>
        </section>

        <section class="panel instruments">
          <div class="head"><h2>Instrumenty (45)</h2>{@render icon("eye")}</div>
          <div class="filterrow">
            {@render combo("Skupina instrumentů", ["Všechny instrumenty"], "w-group", "funnel")}
            <button class="add" aria-label="Přidat instrument">{@render icon("plus")}</button>
          </div>
          <div class="scroller">
            <table class="quotes">
              <thead><tr><th>Ticker &nbsp;{@render icon("sort")}</th><th>Nabídka</th><th>Poptávka</th><th>Denní chg...</th></tr></thead>
              <tbody>
                {#each instruments as q}
                  <tr class={q.quote}>
                    <td class="name">{q.name}</td>
                    <td>{q.bid}<small>{q.bs}</small></td>
                    <td>{q.ask}<small>{q.as}</small></td>
                    <td class={q.chg[0] === "-" ? "c-down" : "c-up"}>{@render icon(q.chg[0] === "-" ? "down" : "up")}<span class="chg">{q.chg}</span></td>
                  </tr>
                {/each}
              </tbody>
            </table>
            <div class="scrollbar first">
              <span>{@render icon("sup")}</span><span class="grip"></span><i></i><span>{@render icon("sdown")}</span>
            </div>
          </div>
        </section>
        <div class="splitter">⋯</div>

        <section class="panel navigator">
          <div class="head"><h2>Navigator</h2>{@render icon("burger")}{@render icon("eye")}</div>
          <div class="filterrow">
            <span class="filter">{@render icon("funnel")}<input type="text" bind:value={filter} aria-label="Filtr navigátoru" /></span>
            <button class="swap" aria-label="Prohodit">{@render icon("swap")}</button>
          </div>
          <div class="scroller">
            <ul class="tree">
              {#each tree as node}
                <li><i></i><i></i><i class="leaf"></i><span class="glyph">{#if node.icon === "fxs"}<em>fx</em>{:else}{@render icon(node.icon)}{/if}</span><span class={node.color}>{node.label}</span></li>
              {/each}
              <li><i></i><b class="minus">−</b><span class="glyph">{@render icon("candles")}</span><span class="sel">GBP/CHF, D1</span></li>
            </ul>
            <div class="scrollbar">
              <span>{@render icon("sup")}</span><i></i><span class="grip"></span><i></i><span>{@render icon("sdown")}</span>
            </div>
          </div>
        </section>
        <svg class="collapse" width="8" height="12" viewBox="0 0 8 12"><path d="M0 6l5-4v8zM6 0h1v12H6z" fill="#c4c4c4" /></svg>
      </aside>

      <main>
        <div class="charts">
          <section class="chartbox">
            <div class="tabs">
              <button class="tab cut">USATECH.IDX, MN1</button>
              <button class="tab">XAG/USD, MN1</button>
              <button class="tab">USD/CNH, MN1</button>
              <button class="tab short">FB.US, W1</button>
              <div class="tab active">
                {@render icon("candles")}<span class="grow">GBP/CHF, D1</span>
                <button aria-label="Odpojit">{@render icon("popout")}</button><button aria-label="Zavřít">{@render icon("close")}</button>
              </div>
              <button class="tab last">TSLA.US, D1</button>
              <div class="tabtools">
                {@render icon("rewind")}{@render icon("addchart")}{@render icon("listdown")}{@render icon("forward")}
              </div>
            </div>
            <div class="frame">{@render chart(gbp)}</div>
          </section>
          <section class="chartbox">
            <div class="tabs">
              <div class="tab active">
                {@render icon("candles")}<span class="grow">CAD/CHF, D1</span>
                <button aria-label="Odpojit">{@render icon("popout")}</button><button aria-label="Zavřít">{@render icon("close")}</button>
              </div>
              <div class="tabtools">{@render icon("addchart")}</div>
            </div>
            <div class="frame">{@render chart(cad)}</div>
          </section>
        </div>

        <div class="divider">
          <svg width="38" height="8" viewBox="0 0 38 8"><path d="M0 7h12v1H0zM6 1l4 4H2zM26 0h12v1H26zM32 7l-4-4h8z" fill="#c4c4c4" /></svg>
        </div>

        <section class="bottom">
          <div class="tabs">
            <button class="tab">Pozice (34){@render icon("popout")}</button>
            <button class="tab active">Přehled pozic (2){@render icon("popout")}</button>
            <button class="tab">Příkazy (26){@render icon("popout")}</button>
            <button class="tab"><b>Zprávy (1)</b>{@render icon("popout")}</button>
            <button class="tab strat">Strategie<span>{@render icon("popout")}{@render icon("close")}</span></button>
          </div>
          <div class="sheet">
            <div class="sheetbar">
              <span class="filter">{@render icon("funnel")}<input type="text" bind:value={posFilter} aria-label="Filtr pozic" /></span>
              {@render icon("erase")}{@render icon("wand")}
              <button class="swap" aria-label="Prohodit">{@render icon("swap")}</button>
            </div>
            <table class="positions">
              <colgroup><col class="c-check" /><col class="c-norm" /><col class="c-norm" /><col class="c-wide" /><col class="c-norm" /><col class="c-norm" /><col class="c-norm" /><col class="c-norm" /><col class="c-x" /></colgroup>
              <thead>
                <tr>
                  <th><input type="checkbox" aria-label="Vybrat vše" /></th>
                  <th class="sorted">Istrument<span>{@render icon("sort")}</span></th>
                  <th>Směr</th><th>Long/Short</th><th>Množství</th><th>Cena</th><th>Použitý margin</th><th class="open">P/L</th><th></th>
                </tr>
              </thead>
              <tbody>
                {#each positions as p}
                  <tr>
                    <td class="mid"><input type="checkbox" aria-label={p.pair} /></td>
                    <td><b>{p.pair}</b></td>
                    <td class="c-up">{p.side}</td>
                    <td><span class="c-up">{p.long}</span> / <span class="c-down">{p.short}</span> (<span class="c-up">{p.nl}</span>/<span class="c-down">{p.ns}</span>)</td>
                    <td class="c-up">{p.qty}</td>
                    <td class="c-up">{p.price}</td>
                    <td class="c-up">{p.margin}</td>
                    <td class="open {p.loss ? 'c-down' : 'c-up'}">{p.pl}</td>
                    <td class="mid"><button aria-label="Zavřít pozici"><svg width="11" height="11" viewBox="0 0 11 11"><path d="M1 1l9 9M10 1l-9 9" stroke="#e00d0d" stroke-width="2.500" /></svg></button></td>
                  </tr>
                {/each}
              </tbody>
            </table>
          </div>
        </section>
      </main>
    </div>

    <footer class="status">
      <div class="free"><span>Volný Margin</span> <span class="c-up">EUR 14'370.87</span></div>
      <div><span>Použitý Margin</span><span class="c-up">EUR 4'567.55</span></div>
      <div class="gap2"><span>Profit/Loss:</span><span class="c-up">EUR 2'551.66</span></div>
      <div class="gap2"><span>Použití pákového efektu:</span><span class="c-up">24%</span></div>
      <label class="check"><input type="checkbox" />Jedno kliknutí</label>
      <span class="fill"></span>
      <span class="jf">JForex</span>
      <span class="conn"><i></i>Připojeno</span>
      <span>Oddělit: 0</span>
      <div class="tip">Vyhľadávaný pojem napíšte sem</div>
    </footer>
  </div>

  <div class="taskbar">
    <button aria-label="Start"><svg width="18" height="18" viewBox="0 0 18 18"><path d="M0 2.500L7.500 1.500v7H0zM8.500 1.300L18 0v8.500H8.500zM0 9.500h7.500v7L0 15.500zM8.500 9.500H18V18l-9.500-1.300z" fill="#fff" /></svg></button>
    <button class="lit" aria-label="Hledat"><svg width="18" height="18" viewBox="0 0 18 18"><circle cx="11" cy="7" r="5.500" fill="none" stroke="#fff" stroke-width="1.300" /><path d="M7 11l-6 6" stroke="#fff" stroke-width="1.500" /></svg></button>
    <button aria-label="Zobrazení úloh"><svg width="18" height="18" viewBox="0 0 18 18" fill="none" stroke="#eee" stroke-width="1.300"><path d="M1 1v2.500h9V1M1 17v-2.500h9V17M1 6h9v5.500H1z" /><path d="M15 1v5M15 11v6M13.500 8.500h3" stroke-width="2" /></svg></button>
    <button aria-label="Edge"><svg width="22" height="22" viewBox="0 0 22 22"><path d="M1 10C2 3 6 1 11 1c6 0 9 4 9 11H8c0 4 6 6 11 3v4.500C11 24 3 20 3.500 13c.3-3 2-5 4.500-6-1 1-1.500 2-1.500 3h8c0-3-1-4.500-4-4.500C6 5.500 3 7.500 1 10z" fill="#0078d7" /></svg></button>
    <button aria-label="Průzkumník"><svg width="22" height="18" viewBox="0 0 22 18"><path d="M1 0h7l2 2h11v16H1z" fill="#f7d774" /><path d="M1 5h20v13H1z" fill="#fde99a" /><path d="M5 18v-6q0-2 2-2h8q2 0 2 2v6h-4v-4H9v4z" fill="#3aa0dd" /></svg></button>
    <button class="lit chrome" aria-label="Chrome"><svg width="22" height="22" viewBox="0 0 22 22"><circle cx="11" cy="11" r="11" fill="#fbc116" /><path d="M1.500 5.500A11 11 0 0 1 20.500 5.500H11A5.500 5.500 0 0 0 6 13z" fill="#e33b2e" /><path d="M1.500 5.500L6 13.500l5 3L9.500 22A11 11 0 0 1 1.500 5.500z" fill="#21a15a" /><circle cx="11" cy="11" r="5.200" fill="#fff" /><circle cx="11" cy="11" r="4" fill="#4285f4" /></svg></button>
    <button aria-label="Store"><svg width="22" height="24" viewBox="0 0 22 24"><path d="M7 8V4q0-3 4-3t4 3v4" fill="none" stroke="#fff" stroke-width="1.500" /><path d="M0 7h22l-1 16H1z" fill="#fff" /><path d="M6 10h4.500v4.500H6z" fill="#f25022" /><path d="M11.500 10H16v4.500h-4.500z" fill="#7fba00" /><path d="M6 15.500h4.500V20H6z" fill="#00a4ef" /><path d="M11.500 15.500H16V20h-4.500z" fill="#ffb900" /></svg></button>
    <button aria-label="Pošta"><svg width="24" height="20" viewBox="0 0 24 20"><path d="M0 7l12-7 12 7v13H0z" fill="#fff" /><path d="M2 7h20l-9 6 5 4-7-4z" fill="#0a0a0a" /></svg></button>
    <button class="running" aria-label="JForex">{@render icon("jf")}</button>
    <div class="clock"><span>9:12</span><span>5.10.2018</span></div>
  </div>
</div>

<style>
  :global(body) {
    background: #fff;
  }

  .desktop {
    display: flex;
    flex-direction: column;
    min-height: 100vh;
    overflow: hidden;
    font: 12px/14px "DejaVu Sans Condensed", "DejaVu Sans", "Noto Sans", sans-serif;
    color: #d6d6d6;
  }

  .desktop :global(*) {
    box-sizing: border-box;
  }

  svg {
    flex: none;
  }

  button,
  input,
  select {
    font: inherit;
    color: inherit;
    background: none;
    border: 0;
    padding: 0;
    margin: 0;
    min-width: 0;
    border-radius: 0;
  }

  h2,
  p,
  ul {
    margin: 0;
    padding: 0;
    font: inherit;
    list-style: none;
  }

  input[type="checkbox"] {
    appearance: none;
    flex: none;
    width: 13px;
    height: 13px;
    border: 1px solid #c0c0c0;
  }

  table {
    border-collapse: collapse;
    table-layout: fixed;
    width: 100%;
  }

  th {
    font-weight: normal;
  }

  small {
    font-size: 9px;
  }

  .c-up {
    color: #a3dc1a;
  }

  .c-down {
    color: #e2745a;
  }

  .c-blue {
    color: #6e92c3;
  }

  .c-gold {
    color: #e0b010;
  }

  .c-pink {
    color: #c20dc2;
  }

  .titlebar {
    display: flex;
    flex: none;
    height: 15px;
    padding: 0 19px 0 6px;
    background: #fff;
    color: #8a8a8a;
    font: 12px/8px Roboto, "Open Sans", sans-serif;
    overflow: hidden;
  }

  .applogo {
    display: flex;
    align-items: center;
    width: 19px;
    height: 8px;
  }

  .applogo svg {
    width: 14px;
    height: 14px;
  }

  .apptitle {
    flex: 1;
    white-space: nowrap;
  }

  .window {
    flex: 1;
    display: flex;
    flex-direction: column;
    margin-left: 3px;
    background: #555;
  }

  .menubar {
    display: flex;
    align-items: center;
    height: 29px;
    padding: 0 5px 2px 10px;
  }

  .menubar nav {
    flex: 1;
    display: flex;
    gap: 23px;
  }

  .chat {
    display: flex;
    align-items: center;
    gap: 4px;
  }

  .sound {
    margin: 0 28px 0 26px;
    line-height: 0;
  }

  .menubar time {
    font-weight: bold;
    font-size: 13px;
  }

  .body {
    flex: 1;
    display: flex;
  }

  .dock {
    position: relative;
    display: flex;
    flex-direction: column;
    width: 330px;
    flex: none;
    padding: 0 16px 0 3px;
  }

  .collapse {
    position: absolute;
    right: 1px;
    top: 482px;
  }

  .panel {
    display: flex;
    flex-direction: column;
    background: #444;
    border: 1px solid #777;
  }

  .head {
    display: flex;
    align-items: center;
    gap: 12px;
    height: 28px;
    padding: 0 5px 0 12px;
    flex: none;
  }

  .head h2 {
    flex: 1;
  }

  .order {
    padding: 0 6px 4px;
    margin-bottom: 5px;
  }

  .order .head {
    padding: 0 0 0 6px;
  }

  .symbol {
    position: relative;
    height: 52px;
    padding: 4px 0 0 20px;
    background: #363636;
    border: 1px solid #4f4f4f;
    white-space: nowrap;
  }

  .pair {
    font-size: 26px;
    line-height: 32px;
    color: #e4e4e4;
  }

  .desc .c-up {
    margin-left: 4px;
    font-size: 13px;
  }

  .bigchev {
    position: absolute;
    right: 6px;
    top: 18px;
  }

  .tiles {
    position: relative;
    display: flex;
    gap: 3px;
    padding: 4px 1px 5px;
  }

  .tile {
    position: relative;
    display: flex;
    flex-direction: column;
    flex: 1;
    height: 104px;
    padding: 22px 0 0;
    border-radius: 4px;
    text-align: left;
    overflow: hidden;
  }

  .tile.sell {
    background: linear-gradient(#d04f29, #c84520);
    border: 1px solid #8e2f18;
    color: #fff;
  }

  .tile.buy {
    background: linear-gradient(#cdec6f, #c0e552);
    border: 1px solid #8fb238;
    color: #454b45;
  }

  .corner {
    position: absolute;
    top: 0;
  }

  .sell .corner,
  .sell b {
    right: 0;
  }

  .buy .corner,
  .buy b {
    left: 0;
  }

  .tile b {
    position: absolute;
    top: 1px;
    padding: 0 4px;
    color: #f3ece8;
    font-size: 13px;
  }

  .fig {
    padding-left: 21px;
    font: 18px/20px "DejaVu Sans", sans-serif;
  }

  .big {
    height: 44px;
    padding-left: 33px;
    font-size: 54px;
    line-height: 44px;
  }

  .big small {
    margin-left: 6px;
    font-size: 18px;
    line-height: 18px;
  }

  .what {
    text-align: center;
  }

  .spread {
    position: absolute;
    left: 136px;
    top: 56px;
    padding: 0 3px;
    background: #4a4a4a;
    border: 1px solid #aaa;
    border-radius: 3px;
    color: #eee;
    line-height: 14px;
  }

  .pairbtns {
    display: flex;
    gap: 3px;
    padding: 0 1px;
  }

  .pairbtns button {
    flex: 1;
    height: 25px;
    background: #6e92c3;
    color: #e8e8e8;
  }

  .qty {
    display: flex;
    align-items: center;
    justify-content: flex-end;
    gap: 4px;
    height: 24px;
    margin-top: 4px;
  }

  .qtybox {
    display: flex;
    align-items: center;
    gap: 8px;
    width: 145px;
    height: 24px;
    padding: 0 3px;
    background: #363636;
    border: 1px solid #4f4f4f;
  }

  .qtybox input {
    flex: 1;
    text-align: right;
  }

  .qtybox svg:first-of-type {
    margin-left: -4px;
  }

  .hide {
    align-self: flex-end;
    display: flex;
    align-items: center;
    gap: 4px;
    height: 22px;
  }

  .hide.deep {
    height: 26px;
  }

  .fields {
    position: relative;
    display: grid;
    grid-template-columns: 123px 70px 1fr;
    gap: 3px;
  }

  /* bracket that ties slippage to the entry condition */
  .fields::before {
    content: "";
    position: absolute;
    left: 5px;
    top: 11px;
    width: 3px;
    height: 54px;
    border: 1px solid #6e92c3;
    border-right: 0;
  }

  .check {
    display: flex;
    align-items: center;
    gap: 4px;
    padding-left: 8px;
  }

  .check.first {
    grid-column: 1 / 4;
    height: 22px;
  }

  .fields input[type="text"] {
    height: 24px;
    padding: 0 5px;
    border: 1px solid #525252;
    color: #858585;
  }

  .fields .indent {
    margin-left: 25px;
  }

  .fields button {
    height: 26px;
    border: 1px solid #4c4c4c;
    color: #7c7c7c;
  }

  .confirm {
    grid-column: 1 / 3;
  }

  .depth th {
    height: 26px;
  }

  .depth th,
  .depth td {
    border: 1px solid #4f4f4f;
    padding: 0 3px;
  }

  .depth td {
    height: 19px;
    text-align: right;
    line-height: 14px;
  }

  .depth td.l {
    text-align: left;
    padding: 0 2px;
  }

  .depth th {
    padding: 0 5px 0 0;
  }

  .totals {
    display: flex;
    justify-content: space-between;
    height: 17px;
    margin-top: 8px;
    padding: 0 19px;
    border: 1px solid #4f4f4f;
    font-weight: bold;
    font-size: 13px;
  }

  .instruments {
    height: 179px;
  }

  .filterrow {
    display: flex;
    align-items: center;
    gap: 6px;
    height: 30px;
    padding-left: 10px;
    flex: none;
  }

  .instruments .filterrow {
    height: 32px;
    padding-bottom: 6px;
  }

  .add {
    margin-left: 7px;
    line-height: 0;
  }

  .scroller {
    flex: 1;
    display: flex;
    min-height: 0;
    overflow: hidden;
  }

  .quotes {
    align-self: flex-start;
  }

  .quotes th {
    height: 27px;
    padding: 0 3px 0 0;
    border: 1px solid #555;
    border-left: 0;
    white-space: nowrap;
  }

  .quotes th svg {
    vertical-align: middle;
  }

  .quotes td {
    height: 19px;
    padding: 0 3px;
    border-right: 1px solid #505050;
    border-bottom: 1px solid #505050;
    background: #404040;
    text-align: right;
  }

  .quotes td.name {
    padding: 0 3px;
    border-left: 6px solid #3e817e;
    font-weight: bold;
    font-size: 13px;
    text-align: left;
  }

  .quotes tr.up td {
    color: #a3dc1a;
  }

  .quotes tr.down td,
  .quotes tr td.c-down {
    color: #cf6a50;
  }

  .quotes tr.down td.name,
  .quotes tr.up td.name {
    color: #eaeaea;
  }

  .chg {
    display: inline-block;
    width: 34px;
  }

  .scrollbar {
    display: flex;
    flex-direction: column;
    width: 17px;
    flex: none;
    border-left: 1px solid #4c4c4c;
  }

  .scrollbar.first {
    padding-top: 27px;
  }

  .scrollbar span {
    display: flex;
    align-items: center;
    justify-content: center;
    height: 17px;
    background: #363636;
  }

  .scrollbar i {
    flex: 1;
  }

  .scrollbar .grip::after {
    content: "";
    width: 7px;
    height: 8px;
    background: repeating-linear-gradient(#999 0 1px, transparent 1px 3px);
  }

  .splitter {
    height: 6px;
    line-height: 6px;
    text-align: center;
    flex: none;
  }

  .navigator {
    flex: 1;
    height: 179px;
  }

  .navigator .head {
    height: 26px;
  }

  .filter {
    display: flex;
    align-items: center;
    width: 176px;
    height: 24px;
    padding-left: 5px;
    background: #363636;
    border: 1px solid #4f4f4f;
  }

  .filter input {
    flex: 1;
    padding: 0 6px;
  }

  .swap {
    display: flex;
    align-items: center;
    justify-content: center;
    width: 31px;
    height: 28px;
    background: #383838;
    border: 1px solid #4c4c4c;
  }

  .tree {
    flex: 1;
    height: 121px;
    display: flex;
    flex-direction: column;
    justify-content: flex-end;
    overflow: hidden;
    padding: 0 0 1px 9px;
  }

  .tree li {
    display: flex;
    align-items: center;
    height: 19px;
    flex: none;
  }

  .tree i {
    width: 19px;
    height: 19px;
    border-left: 1px dotted #777;
  }

  .tree .leaf {
    width: 11px;
    background: linear-gradient(#666, #666) center / 100% 1px no-repeat;
  }

  .glyph {
    display: flex;
    width: 20px;
  }

  .tree em {
    font: italic 18px/16px "Liberation Serif", serif;
  }

  .tree .gold {
    color: #e0b010;
  }

  .tree .red {
    color: #e0121c;
  }

  .tree .sel {
    padding: 1px 4px 1px 1px;
    background: #6e92c3;
  }

  .minus {
    width: 9px;
    height: 9px;
    margin: 0 7px 0 -4px;
    background: #ddd;
    color: #333;
    line-height: 8px;
    text-align: center;
  }

  main {
    flex: 1;
    min-width: 0;
    display: flex;
    flex-direction: column;
  }

  .charts {
    display: flex;
    gap: 2px;
  }

  .chartbox {
    flex: 1;
    min-width: 0;
  }

  .tabs {
    display: flex;
    align-items: flex-end;
    height: 28px;
    white-space: nowrap;
  }

  .tab {
    display: flex;
    align-items: center;
    justify-content: center;
    width: 111px;
    height: 26px;
    padding-right: 3px;
    border: 1px solid #777;
    border-width: 1px 0 1px 1px;
    background: #4c4c4c;
    overflow: hidden;
  }

  .tab.cut {
    justify-content: flex-end;
    width: 110px;
    padding-right: 16px;
    border-left: 0;
  }

  .tab.short {
    width: 87px;
  }

  .tab.last {
    width: 100px;
    border-right-width: 1px;
  }

  .tab.active {
    gap: 7px;
    width: 161px;
    height: 28px;
    padding: 0 8px 1px 11px;
    border-width: 1px 1px 0;
    background: #444;
  }

  .tab.active + .tab {
    border-left: 0;
  }

  .tab button {
    line-height: 0;
  }

  .grow {
    flex: 1;
    padding-left: 6px;
  }

  .tabtools {
    flex: 1;
    display: flex;
    align-items: center;
    gap: 11px;
    height: 26px;
    padding-left: 7px;
    border-bottom: 1px solid #777;
  }

  .frame {
    border: 1px solid #777;
    border-top: 0;
    background: #444;
  }

  .toolbar {
    display: flex;
    align-items: center;
    height: 39px;
    gap: 2px;
    padding-left: 4px;
    border-bottom: 1px solid #505050;
  }

  .combo {
    position: relative;
    display: flex;
    height: 24px;
    background: #363636;
    border: 1px solid #4f4f4f;
  }

  .combo select {
    appearance: none;
    width: 100%;
    padding: 0 18px 0 5px;
  }

  .combo .i-chev {
    position: absolute;
    right: 2px;
    top: 8px;
    pointer-events: none;
  }

  .combo option {
    background: #363636;
  }

  .lead {
    display: flex;
    align-items: center;
    padding-left: 4px;
  }

  .w-pair {
    width: 121px;
  }

  .w-period {
    width: 143px;
  }

  .w-type {
    width: 93px;
  }

  .w-type select {
    padding-left: 6px;
  }

  .w-side {
    width: 75px;
  }

  .w-group {
    width: 176px;
  }

  .w-group select {
    padding-left: 6px;
  }

  .tool {
    display: flex;
    align-items: center;
    justify-content: center;
    width: 32px;
    height: 28px;
  }

  .w-side + .tool {
    margin: 0 0 0 5px;
  }

  .tool.on {
    background: #383838;
    border: 1px solid #4c4c4c;
  }

  .tool.low {
    padding-top: 5px;
  }

  .tool.fx {
    padding: 0 0 2px 2px;
    color: #c8c8c8;
    font: italic 22px/20px "Liberation Serif", serif;
  }

  .more {
    display: flex;
    align-items: center;
    gap: 4px;
    margin-left: 17px;
    color: #bbb;
  }

  .pane {
    position: relative;
    display: flex;
    border-top: 1px solid #666;
  }

  .pane.main {
    border-top: 0;
  }

  .pane.thick {
    border-top-width: 2px;
  }

  .plot {
    flex: 1 1 0;
    min-width: 0;
    background: #353535;
  }

  .axis {
    clip-path: inset(0 0 0 -40px);
    overflow: visible;
    border-left: 1px solid #888;
    fill: #d6d6d6;
  }

  .level {
    fill: #777;
  }

  .tag {
    stroke: #222;
  }

  .tag.light {
    stroke: #d0d0d0;
  }

  .tagtext {
    fill: #3a3a20;
  }

  .tagtext.light {
    fill: #ead8dc;
  }

  .gridline,
  .lvl,
  .dotted,
  .limit {
    shape-rendering: crispEdges;
  }

  .gridline {
    stroke: #3d3d3d;
  }

  .lvl {
    stroke-dasharray: 3 3;
  }

  .lvl.o,
  .lvl.od,
  .lvl.ot {
    stroke: #66802b;
  }

  .lvl.g,
  .lvl.gd,
  .lvl.gt {
    stroke: #8c8c8c;
  }

  .lvl.od,
  .lvl.gd {
    stroke-dasharray: 1 2;
  }

  .lvl.ot,
  .lvl.gt {
    stroke-width: 3;
  }

  .ray {
    fill: none;
    stroke: #9c3030;
    stroke-dasharray: 1 1;
  }

  .ray.olive {
    stroke: #55692b;
  }

  .dotted {
    stroke: #777;
    stroke-dasharray: 1 2;
  }

  .ma,
  .ind {
    fill: none;
    stroke-width: 1;
  }

  .ma.red {
    stroke: #ff0000;
    stroke-width: 2;
  }

  .ma.blue {
    stroke: #6e92c3;
    stroke-width: 2;
  }

  .ma.gold {
    stroke: #cf9f10;
  }

  .mark {
    fill: #919191;
  }

  .mark.r {
    fill: #ff3030;
  }

  .mark.o {
    fill: #759a28;
  }

  .ind {
    stroke: #6384b0;
  }

  .ind.k {
    stroke-dasharray: 5 4;
  }

  .ind.d {
    stroke: #f0bc08;
    stroke-dasharray: 5 4;
  }

  .ind.s {
    stroke: #ffd000;
    stroke-dasharray: 6 4;
  }

  .limit {
    stroke: #777;
    stroke-dasharray: 6 3;
  }

  .legend {
    position: absolute;
    left: 5px;
    top: 6px;
    display: flex;
    align-items: center;
    white-space: pre;
    color: #b4b4b4;
  }

  .legend svg {
    margin-right: 3px;
  }

  .swatch {
    width: 26px;
    height: 2px;
    margin-left: 4px;
    background: #5a78a0;
  }

  .time {
    border-top: 1px solid #777;
    padding-right: 74px;
  }

  .scale {
    border-right: 1px solid #e0e0e0;
  }

  .months {
    display: flex;
    height: 14px;
    border-bottom: 1px solid #f0f0f0;
    line-height: 13px;
  }

  .months span {
    flex: 1 1 0;
    padding-left: 2px;
    border-left: 1px solid #c0c0c0;
  }

  .months span:first-child {
    border-left-color: transparent;
  }

  .year {
    height: 12px;
    line-height: 12px;
    text-align: center;
  }

  .divider {
    height: 16px;
    padding: 3px 0 0 26px;
    text-align: center;
    line-height: 0;
  }

  .bottom {
    flex: 1;
    display: flex;
    flex-direction: column;
  }

  .bottom .tabs {
    height: 29px;
    padding-left: 3px;
    border-bottom: 1px solid #777;
  }

  .bottom .tab {
    justify-content: space-between;
    width: 108px;
    height: 25px;
    padding: 0 8px 1px 11px;
    border-bottom: 0;
  }

  .bottom .tab.active {
    width: 138px;
    height: 28px;
    padding-bottom: 3px;
    margin-bottom: -1px;
  }

  .bottom .tab.strat {
    width: 112px;
    padding-right: 6px;
    border-right-width: 1px;
  }

  .strat span {
    display: flex;
    align-items: center;
    gap: 6px;
  }

  .sheet {
    flex: 1;
    background: #444;
    border: 1px solid #777;
    border-top: 0;
    border-right: 0;
  }

  .sheetbar {
    display: flex;
    align-items: center;
    gap: 15px;
    height: 31px;
    padding-left: 11px;
  }

  .sheetbar .swap {
    margin-left: 2px;
  }

  .c-check {
    width: 40px;
  }

  .c-norm {
    width: 13%;
  }

  .c-x {
    width: 25px;
  }

  .positions th {
    height: 27px;
    padding: 0 5px 0 0;
    border: 1px solid #525252;
    border-left: 0;
  }

  .positions th:first-child {
    padding: 0;
  }

  .positions td {
    height: 19px;
    padding: 0 4px;
    border-right: 1px solid #525252;
    border-bottom: 1px solid #505050;
    text-align: right;
  }

  .positions .open {
    border-right: 0;
  }

  .positions td.mid {
    padding: 0;
    text-align: center;
    line-height: 0;
  }

  .positions th input {
    vertical-align: middle;
    margin: 0;
  }

  .sorted span {
    float: right;
    padding-right: 6px;
  }

  .positions b {
    color: #eee;
  }

  .status {
    position: relative;
    display: flex;
    align-items: center;
    height: 16px;
    padding-right: 7px;
    white-space: nowrap;
  }

  .status > div {
    display: flex;
    gap: 5px;
    padding: 0 7px 0 8px;
    border-left: 1px solid #4a4a4a;
  }

  .status > .gap2 {
    gap: 12px;
  }

  .status > .free {
    justify-content: flex-end;
    width: 330px;
    border-left: 0;
  }

  .fill {
    flex: 1;
  }

  .jf {
    margin-right: 18px;
  }

  .conn {
    display: flex;
    align-items: center;
    gap: 3px;
    margin-right: 16px;
  }

  .conn i {
    width: 11px;
    height: 11px;
    background: #00b400;
    border: 1px solid #2a5a2a;
  }

  .status > .tip {
    position: absolute;
    left: 0;
    bottom: 0;
    height: 20px;
    padding: 2px 6px 2px 5px;
    background: #fff;
    border: 1px solid #999;
    color: #555;
    font: 12px/14px Roboto, "Noto Sans", sans-serif;
  }

  .taskbar {
    display: flex;
    flex: none;
    height: 40px;
    padding-left: 2px;
    background: #08080b;
  }

  .taskbar button {
    display: flex;
    align-items: center;
    justify-content: center;
    width: 49px;
    height: 40px;
  }

  .taskbar .lit {
    background: #252528;
  }

  .taskbar .chrome {
    background: #3d4247;
  }

  .taskbar .chrome,
  .taskbar .running {
    border-top: 2px solid transparent;
    border-bottom: 2px solid #76b9ed;
  }

  .clock {
    flex: 1;
    display: flex;
    flex-direction: column;
    justify-content: center;
    align-items: flex-end;
    padding: 0 6px 1px 0;
    color: #fff;
    font: 11px/18px "Open Sans", sans-serif;
  }

  .clock span {
    width: 50px;
    text-align: center;
  }
</style>
